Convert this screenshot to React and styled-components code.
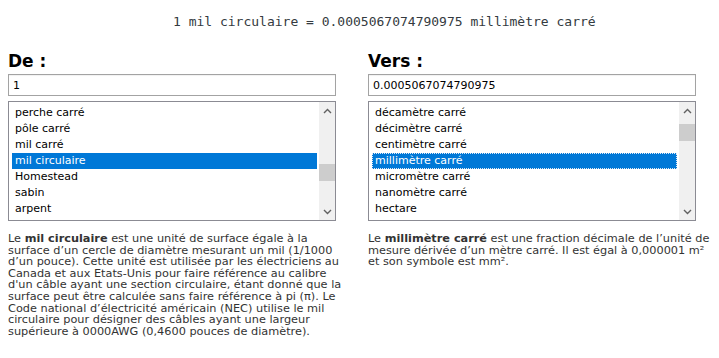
import styled, { createGlobalStyle } from "styled-components";

const GlobalStyle = createGlobalStyle`
  body {
    margin: 0;
    background: #fff;
    font-family: "DejaVu Sans", Verdana, sans-serif;
  }
`;

const fromUnits = [
  "acre (arpentage)",
  "perche carré",
  "pôle carré",
  "mil carré",
  "mil circulaire",
  "Homestead",
  "sabin",
  "arpent",
];

const toUnits = [
  "décamètre carré",
  "décimètre carré",
  "centimètre carré",
  "millimètre carré",
  "micromètre carré",
  "nanomètre carré",
  "hectare",
];

function Chevron({ down }) {
  return (
    <svg width="9" height="6" viewBox="0 0 9 6">
      <path
        d={down ? "M1 1 L4.5 4.5 L8 1" : "M1 5 L4.5 1.5 L8 5"}
        fill="none"
        stroke="#606060"
        strokeWidth="1.4"
      />
    </svg>
  );
}

function ListBox({ items, selected, scroll, thumbTop, focused }) {
  return (
    <Box>
      <Viewport>
        <Items style={{ marginTop: -scroll }}>
          {items.map((it) => (
            <Option
              key={it}
              $active={it === selected}
              $focused={focused && it === selected}
            >
              {it}
            </Option>
          ))}
        </Items>
      </Viewport>
      <ScrollBar>
        <Arrow>
          <Chevron />
        </Arrow>
        <Track>
          <Thumb style={{ marginTop: thumbTop }} />
        </Track>
        <Arrow>
          <Chevron down />
        </Arrow>
      </ScrollBar>
    </Box>
  );
}

export default function App() {
  return (
    <Page>
      <GlobalStyle />
      <Result>1 mil circulaire = 0.0005067074790975 millimètre carré</Result>
      <Columns>
        <Column>
          <Heading>De :</Heading>
          <Field defaultValue="1" />
          <ListBox
            items={fromUnits}
            selected="mil circulaire"
            scroll={16}
            thumbTop={45}
          />
          <Description>
            Le <b>mil circulaire</b> est une unité de surface égale à la
            <br />
            surface d’un cercle de diamètre mesurant un mil (1/1000
            <br />
            d’un pouce). Cette unité est utilisée par les électriciens au
            <br />
            Canada et aux Etats-Unis pour faire référence au calibre
            <br />
            d'un câble ayant une section circulaire, étant donné que la
            <br />
            surface peut être calculée sans faire référence à pi (π). Le
            <br />
            Code national d’électricité américain (NEC) utilise le mil
            <br />
            circulaire pour désigner des câbles ayant une largeur
            <br />
            supérieure à 0000AWG (0,4600 pouces de diamètre).
          </Description>
        </Column>
        <Column>
          <Heading>Vers :</Heading>
          <Field defaultValue="0.0005067074790975" />
          <ListBox
            items={toUnits}
            selected="millimètre carré"
            scroll={0}
            thumbTop={5}
            focused
          />
          <Description>
            Le <b>millimètre carré</b> est une fraction décimale de l’unité de
            <br />
            mesure dérivée d’un mètre carré. Il est égal à 0,000001 m²
            <br />
            et son symbole est mm².
          </Description>
        </Column>
      </Columns>
    </Page>
  );
}

const Page = styled.div`
  padding: 0 8px;
`;

const Result = styled.div`
  box-sizing: border-box;
  height: 44px;
  padding: 14px 0 0 165px;
  font-family: "DejaVu Sans Mono", "Liberation Mono", monospace;
  font-size: 13px;
  line-height: 16px;
  color: #343a40;
`;

const Columns = styled.div`
  display: flex;
  gap: 32px;
`;

const Column = styled.div`
  width: 328px;
  display: flex;
  flex-direction: column;
`;

const Heading = styled.h2`
  box-sizing: border-box;
  height: 30px;
  margin: 0;
  padding-top: 6px;
  font-family: "DejaVu Sans", Verdana, sans-serif;
  font-weight: bold;
  font-size: 17px;
  line-height: 22px;
  color: #000;
`;

const Field = styled.input`
  box-sizing: border-box;
  width: 328px;
  height: 22px;
  margin: 0 0 5px;
  padding: 0 4px;
  border: 1px solid #a3a3a3;
  box-shadow: inset 0 1px 1px rgba(0, 0, 0, 0.06);
  font-family: "DejaVu Sans", Verdana, sans-serif;
  font-size: 11px;
  color: #000;
  outline: none;
`;

const Box = styled.div`
  box-sizing: border-box;
  width: 328px;
  height: 120px;
  border: 1px solid #8b8b93;
  display: flex;
  background: #fff;
`;

const Viewport = styled.div`
  flex: 1;
  overflow: hidden;
  padding: 3px 2px 0 3px;
`;

const Items = styled.div`
  display: flex;
  flex-direction: column;
`;

const Option = styled.div`
  box-sizing: border-box;
  height: 16px;
  line-height: 14px;
  padding: 0 2px;
  font-family: "DejaVu Sans", Tahoma, sans-serif;
  font-size: 11px;
  white-space: nowrap;
  color: ${(p) => (p.$active ? "#fff" : "#000")};
  background: ${(p) => (p.$active ? "#0078d7" : "transparent")};
  border: 1px ${(p) => (p.$focused ? "dotted #dfe9f5" : "solid transparent")};
`;

const ScrollBar = styled.div`
  width: 16px;
  background: #f0f0f0;
  display: flex;
  flex-direction: column;
`;

const Arrow = styled.div`
  height: 17px;
  display: flex;
  align-items: center;
  justify-content: center;
`;

const Track = styled.div`
  flex: 1;
`;

const Thumb = styled.div`
  height: 17px;
  background: #cdcdcd;
`;

const Description = styled.p`
  margin: 12px 0 0;
  white-space: nowrap;
  font-family: "DejaVu Sans", Verdana, sans-serif;
  font-size: 11.3px;
  line-height: 11.6px;
  color: #333;

  b {
    font-weight: bold;
  }
`;
